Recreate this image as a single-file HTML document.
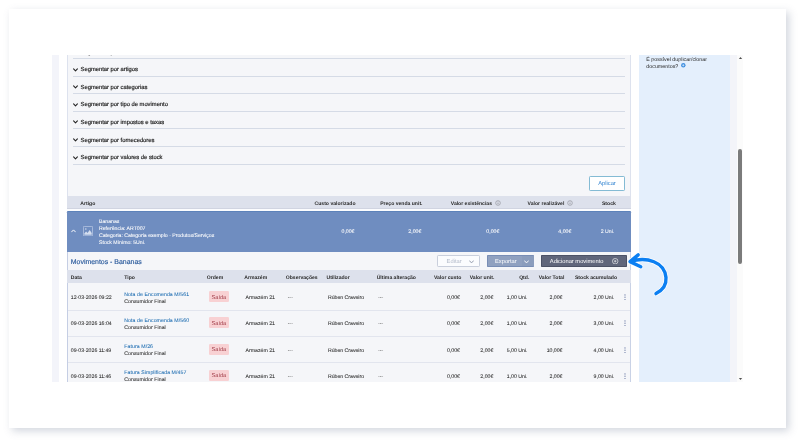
<!DOCTYPE html>
<html lang="pt"><head><meta charset="utf-8"><title>Movimentos - Bananas</title>
<style>
html,body{margin:0;padding:0;background:#fff;}
body{width:800px;height:442px;position:relative;overflow:hidden;font-family:"Liberation Sans",sans-serif;}
#card{position:absolute;left:8.5px;top:8.5px;width:777.4px;height:419px;background:#fff;box-shadow:3px 3px 8px rgba(105,118,145,0.30);}
#shot{position:absolute;left:52px;top:54px;width:691.0px;height:328.0px;overflow:hidden;will-change:transform;}
#in{position:absolute;left:-52px;top:-54px;width:800px;height:442px;}
.b{position:absolute;display:block;}
.t{position:absolute;white-space:nowrap;text-rendering:geometricPrecision;line-height:10px;margin-top:-5px;color:#222;}
.seg{font-size:5.8px;color:#1d1d1d;-webkit-text-stroke:0.18px #1d1d1d;margin-top:-4px;}
.btn{font-size:5.75px;margin-top:-4px;}
.th{font-size:5.08px;font-weight:bold;color:#2a2a2a;margin-top:-4px;}
.td{font-size:5.18px;color:#2b2b2b;-webkit-text-stroke:0.07px currentColor;margin-top:-4px;}
.title{font-size:6.95px;color:#2a5a9c;-webkit-text-stroke:0.15px #2a5a9c;margin-top:-4px;}
.badge{font-size:5.6px;color:#a3404c;margin-top:-4.5px;}
.side{font-size:5.33px;color:#2a2a2a;margin-top:-4.5px;}
</style></head>
<body>
<div id="card"></div>
<div id="shot"><div id="in">
<div class="b " style="left:51.90px;top:54.40px;width:6.80px;height:327.60px;background:#f3f4fa"></div>
<div class="b " style="left:67.30px;top:54.40px;width:563.40px;height:327.60px;background:#f5f6f9;border-left:0.7px solid #dde2ee;border-right:0.7px solid #dde2ee;box-sizing:border-box"></div>
<div class="b " style="left:639.30px;top:54.40px;width:90.80px;height:327.60px;background:#e4effc"></div>
<div class="b " style="left:730.10px;top:54.40px;width:7.10px;height:327.60px;background:#f3f4f9"></div>
<div class="b " style="left:737.20px;top:54.40px;width:5.70px;height:327.60px;background:#fbfbfb"></div>
<div class="b " style="left:738.30px;top:148.70px;width:3.70px;height:115.30px;background:#7b7b7b;border-radius:2px"></div>
<svg class="b" style="left:737.5px;top:55.5px" width="5" height="4" viewBox="0 0 5 4"><path d="M2.5 1.0 L4.1 3.1 L0.9 3.1 Z" fill="#505050"/></svg>
<svg class="b" style="left:737.5px;top:377.2px" width="5" height="4" viewBox="0 0 5 4"><path d="M2.5 3.1 L4.1 1.0 L0.9 1.0 Z" fill="#505050"/></svg>
<div class="b " style="left:73.30px;top:58.00px;width:551.30px;height:0.90px;background:#d5dbe6"></div>
<div class="b " style="left:73.30px;top:75.60px;width:551.30px;height:0.90px;background:#d5dbe6"></div>
<div class="b " style="left:73.30px;top:93.20px;width:551.30px;height:0.90px;background:#d5dbe6"></div>
<div class="b " style="left:73.30px;top:110.80px;width:551.30px;height:0.90px;background:#d5dbe6"></div>
<div class="b " style="left:73.30px;top:128.40px;width:551.30px;height:0.90px;background:#d5dbe6"></div>
<div class="b " style="left:73.30px;top:146.00px;width:551.30px;height:0.90px;background:#d5dbe6"></div>
<div class="b " style="left:73.30px;top:163.85px;width:551.30px;height:0.90px;background:#d5dbe6"></div>
<span class="t seg" style="top:51.50px;left:80.60px;">Segmentar por datas</span>
<svg class="b" style="left:73.2px;top:67.50px" width="5" height="4" viewBox="0 0 5 4"><path d="M0.6 0.9 L2.5 2.9 L4.4 0.9" fill="none" stroke="#222" stroke-width="1.05" stroke-linecap="round" stroke-linejoin="round"/></svg>
<span class="t seg" style="top:69.10px;left:80.60px;">Segmentar por artigos</span>
<svg class="b" style="left:73.2px;top:85.10px" width="5" height="4" viewBox="0 0 5 4"><path d="M0.6 0.9 L2.5 2.9 L4.4 0.9" fill="none" stroke="#222" stroke-width="1.05" stroke-linecap="round" stroke-linejoin="round"/></svg>
<span class="t seg" style="top:86.70px;left:80.60px;">Segmentar por categorias</span>
<svg class="b" style="left:73.2px;top:102.70px" width="5" height="4" viewBox="0 0 5 4"><path d="M0.6 0.9 L2.5 2.9 L4.4 0.9" fill="none" stroke="#222" stroke-width="1.05" stroke-linecap="round" stroke-linejoin="round"/></svg>
<span class="t seg" style="top:104.30px;left:80.60px;">Segmentar por tipo de movimento</span>
<svg class="b" style="left:73.2px;top:120.30px" width="5" height="4" viewBox="0 0 5 4"><path d="M0.6 0.9 L2.5 2.9 L4.4 0.9" fill="none" stroke="#222" stroke-width="1.05" stroke-linecap="round" stroke-linejoin="round"/></svg>
<span class="t seg" style="top:121.90px;left:80.60px;">Segmentar por impostos e taxas</span>
<svg class="b" style="left:73.2px;top:137.90px" width="5" height="4" viewBox="0 0 5 4"><path d="M0.6 0.9 L2.5 2.9 L4.4 0.9" fill="none" stroke="#222" stroke-width="1.05" stroke-linecap="round" stroke-linejoin="round"/></svg>
<span class="t seg" style="top:139.50px;left:80.60px;">Segmentar por fornecedores</span>
<svg class="b" style="left:73.2px;top:155.50px" width="5" height="4" viewBox="0 0 5 4"><path d="M0.6 0.9 L2.5 2.9 L4.4 0.9" fill="none" stroke="#222" stroke-width="1.05" stroke-linecap="round" stroke-linejoin="round"/></svg>
<span class="t seg" style="top:157.10px;left:80.60px;">Segmentar por valores de stock</span>
<div class="b " style="left:589.30px;top:176.20px;width:35.50px;height:14.60px;background:#fff;border:0.7px solid #84bbd4;border-radius:1.2px;box-sizing:border-box"></div>
<span class="t btn" style="top:183.40px;left:598.20px;color:#2f82d0">Aplicar</span>
<div class="b " style="left:67.30px;top:196.20px;width:563.40px;height:12.50px;background:#dde1ec;border-bottom:0.7px solid #d0d4e1;box-sizing:border-box"></div>
<div class="b " style="left:67.30px;top:208.80px;width:563.40px;height:2.10px;background:#fbfcfe"></div>
<span class="t th" style="top:202.80px;left:80.30px;">Artigo</span>
<span class="t th" style="top:202.80px;right:444.50px;">Custo valorizado</span>
<span class="t th" style="top:202.80px;right:377.50px;">Preço venda unit.</span>
<span class="t th" style="top:202.80px;right:308.00px;">Valor existências</span>
<span class="t th" style="top:202.80px;right:235.70px;">Valor realizável</span>
<span class="t th" style="top:202.80px;right:184.20px;">Stock</span>
<svg class="b" style="left:494.70px;top:200.10px" width="6" height="6" viewBox="0 0 6 6"><circle cx="3" cy="3" r="2.35" fill="none" stroke="#6a6a72" stroke-width="0.42"/><path d="M3 2.7V4.2M3 1.7V2.15" stroke="#6a6a72" stroke-width="0.55"/></svg>
<svg class="b" style="left:566.80px;top:200.10px" width="6" height="6" viewBox="0 0 6 6"><circle cx="3" cy="3" r="2.35" fill="none" stroke="#6a6a72" stroke-width="0.42"/><path d="M3 2.7V4.2M3 1.7V2.15" stroke="#6a6a72" stroke-width="0.55"/></svg>
<div class="b " style="left:67.30px;top:210.70px;width:563.40px;height:40.90px;background:#6f8dc0;border-top:0.9px solid #5c82ba;box-sizing:border-box;border-radius:1.3px 1.3px 0 0"></div>
<svg class="b" style="left:70.9px;top:229.3px" width="5" height="4" viewBox="0 0 5 4"><path d="M0.6 2.9 L2.5 0.9 L4.4 2.9" fill="none" stroke="#fff" stroke-width="0.95" stroke-linecap="round" stroke-linejoin="round"/></svg>
<svg class="b" style="left:82.6px;top:226px" width="10" height="10.2" viewBox="0 0 10 10.2"><rect x="0.35" y="0.35" width="9.3" height="9.5" rx="1" fill="none" stroke="#d2dcef" stroke-width="0.65"/><path d="M1.3 8.7 L1.3 7.6 L3.1 5.4 L4.5 6.9 L6.7 3.9 L8.7 7.0 L8.7 8.7 Z" fill="#d4deef"/><circle cx="2.8" cy="2.9" r="0.75" fill="#d4deef"/></svg>
<span class="t td" style="top:220.60px;left:99.00px;color:#fff">Bananas</span>
<span class="t td" style="top:227.90px;left:99.00px;color:#fff">Referência: ART007</span>
<span class="t td" style="top:235.00px;left:99.00px;color:#fff">Categoria: Categoria exemplo - Produtos/Serviços</span>
<span class="t td" style="top:242.10px;left:99.00px;color:#fff">Stock Mínimo: 5Uni.</span>
<span class="t td" style="top:231.00px;right:445.50px;color:#fff">0,00€</span>
<span class="t td" style="top:231.00px;right:378.70px;color:#fff">2,00€</span>
<span class="t td" style="top:231.00px;right:300.70px;color:#fff">0,00€</span>
<span class="t td" style="top:231.00px;right:228.70px;color:#fff">4,00€</span>
<span class="t td" style="top:231.00px;right:185.70px;color:#fff">2 Uni.</span>
<span class="t title" style="top:261.60px;left:70.80px;">Movimentos - Bananas</span>
<div class="b " style="left:437.40px;top:255.10px;width:42.50px;height:11.90px;background:#fbfcfe;border:0.8px solid #c9cfdc;border-radius:1.2px;box-sizing:border-box"></div>
<span class="t btn" style="top:261.20px;left:446.60px;color:#b3bac9">Editar</span>
<svg class="b" style="left:469.2px;top:259.6px" width="5" height="4" viewBox="0 0 5 4"><path d="M0.5 0.8 L2.5 2.9 L4.5 0.8" fill="none" stroke="#939bad" stroke-width="1.0" stroke-linecap="round" stroke-linejoin="round"/></svg>
<div class="b " style="left:486.80px;top:255.10px;width:47.70px;height:11.90px;background:#90a1c0;border:0.8px solid #788db5;border-radius:0.8px;box-sizing:border-box"></div>
<div class="b " style="left:521.50px;top:255.90px;width:12.20px;height:10.30px;background:#8b9dbd"></div>
<span class="t btn" style="top:261.20px;left:495.00px;color:#fff">Exportar</span>
<svg class="b" style="left:524px;top:259.5px" width="5" height="4" viewBox="0 0 5 4"><path d="M0.5 0.8 L2.5 2.9 L4.5 0.8" fill="none" stroke="#fff" stroke-width="0.95" stroke-linecap="round" stroke-linejoin="round"/></svg>
<div class="b " style="left:540.70px;top:255.00px;width:86.60px;height:11.60px;background:#60667b;border:0.8px solid #4c5266;border-radius:0.8px;box-sizing:border-box"></div>
<span class="t btn" style="top:261.00px;left:549.80px;color:#fff">Adicionar movimento</span>
<svg class="b" style="left:612.4px;top:257.7px" width="6.4" height="6.4" viewBox="0 0 6.4 6.4"><circle cx="3.2" cy="3.2" r="2.75" fill="none" stroke="#fff" stroke-width="0.6"/><path d="M3.2 1.9V4.5M1.9 3.2H4.5" stroke="#fff" stroke-width="0.6"/></svg>
<div class="b " style="left:67.30px;top:251.70px;width:0.70px;height:130.30px;background:#c5cee4"></div>
<div class="b " style="left:630.00px;top:251.70px;width:0.70px;height:130.30px;background:#c9d2e6"></div>
<div class="b " style="left:67.30px;top:270.30px;width:563.40px;height:13.20px;background:#dde1ec"></div>
<span class="t th" style="top:277.30px;left:70.80px;">Data</span>
<span class="t th" style="top:277.30px;left:124.30px;">Tipo</span>
<span class="t th" style="top:277.30px;left:206.80px;">Ordem</span>
<span class="t th" style="top:277.30px;left:244.30px;">Armazém</span>
<span class="t th" style="top:277.30px;left:285.80px;">Observações</span>
<span class="t th" style="top:277.30px;left:326.50px;">Utilizador</span>
<span class="t th" style="top:277.30px;left:376.70px;">Última alteração</span>
<span class="t th" style="top:277.30px;right:338.70px;">Valor custo</span>
<span class="t th" style="top:277.30px;right:305.70px;">Valor unit.</span>
<span class="t th" style="top:277.30px;right:270.70px;">Qtd.</span>
<span class="t th" style="top:277.30px;right:235.70px;">Valor Total</span>
<span class="t th" style="top:277.30px;right:183.00px;">Stock acumulado</span>
<span class="t td" style="top:297.00px;left:70.80px;">12-03-2026 09:22</span>
<span class="t td" style="top:293.50px;left:124.30px;letter-spacing:0.08px;color:#1f6eb2">Nota de Encomenda M/561</span>
<span class="t td" style="top:300.50px;left:124.30px;letter-spacing:0.06px;">Consumidor Final</span>
<div class="b " style="left:208.50px;top:291.10px;width:20.25px;height:11.20px;background:#f8d1d3;border-radius:1.3px"></div>
<span class="t badge" style="top:297.00px;left:211.60px;">Saída</span>
<span class="t td" style="top:297.00px;left:245.60px;">Armazém 21</span>
<span class="t td" style="top:297.00px;left:287.70px;">---</span>
<span class="t td" style="top:297.00px;left:327.90px;">Rúben Craveiro</span>
<span class="t td" style="top:297.00px;left:378.00px;">---</span>
<span class="t td" style="top:297.00px;right:340.00px;">0,00€</span>
<span class="t td" style="top:297.00px;right:306.70px;">2,00€</span>
<span class="t td" style="top:297.00px;right:272.50px;">1,00 Uni.</span>
<span class="t td" style="top:297.00px;right:237.50px;">2,00€</span>
<span class="t td" style="top:297.00px;right:185.70px;">2,00 Uni.</span>
<svg class="b" style="left:623.5px;top:293.80px" width="2" height="6.4" viewBox="0 0 2 6.4"><circle cx="1" cy="0.9" r="0.6" fill="#5f6f9c"/><circle cx="1" cy="3.2" r="0.6" fill="#5f6f9c"/><circle cx="1" cy="5.5" r="0.6" fill="#5f6f9c"/></svg>
<div class="b " style="left:67.80px;top:309.85px;width:562.40px;height:0.90px;background:#e2e5ee"></div>
<span class="t td" style="top:323.20px;left:70.80px;">09-03-2026 16:04</span>
<span class="t td" style="top:319.70px;left:124.30px;letter-spacing:0.08px;color:#1f6eb2">Nota de Encomenda M/560</span>
<span class="t td" style="top:326.70px;left:124.30px;letter-spacing:0.06px;">Consumidor Final</span>
<div class="b " style="left:208.50px;top:317.30px;width:20.25px;height:11.20px;background:#f8d1d3;border-radius:1.3px"></div>
<span class="t badge" style="top:323.20px;left:211.60px;">Saída</span>
<span class="t td" style="top:323.20px;left:245.60px;">Armazém 21</span>
<span class="t td" style="top:323.20px;left:287.70px;">---</span>
<span class="t td" style="top:323.20px;left:327.90px;">Rúben Craveiro</span>
<span class="t td" style="top:323.20px;left:378.00px;">---</span>
<span class="t td" style="top:323.20px;right:340.00px;">0,00€</span>
<span class="t td" style="top:323.20px;right:306.70px;">2,00€</span>
<span class="t td" style="top:323.20px;right:272.50px;">1,00 Uni.</span>
<span class="t td" style="top:323.20px;right:237.50px;">2,00€</span>
<span class="t td" style="top:323.20px;right:185.70px;">3,00 Uni.</span>
<svg class="b" style="left:623.5px;top:320.00px" width="2" height="6.4" viewBox="0 0 2 6.4"><circle cx="1" cy="0.9" r="0.6" fill="#5f6f9c"/><circle cx="1" cy="3.2" r="0.6" fill="#5f6f9c"/><circle cx="1" cy="5.5" r="0.6" fill="#5f6f9c"/></svg>
<div class="b " style="left:67.80px;top:335.85px;width:562.40px;height:0.90px;background:#e2e5ee"></div>
<span class="t td" style="top:349.70px;left:70.80px;">09-03-2026 11:49</span>
<span class="t td" style="top:346.20px;left:124.30px;letter-spacing:0.08px;color:#1f6eb2">Fatura M/26</span>
<span class="t td" style="top:353.20px;left:124.30px;letter-spacing:0.06px;">Consumidor Final</span>
<div class="b " style="left:208.50px;top:343.80px;width:20.25px;height:11.20px;background:#f8d1d3;border-radius:1.3px"></div>
<span class="t badge" style="top:349.70px;left:211.60px;">Saída</span>
<span class="t td" style="top:349.70px;left:245.60px;">Armazém 21</span>
<span class="t td" style="top:349.70px;left:287.70px;">---</span>
<span class="t td" style="top:349.70px;left:327.90px;">Rúben Craveiro</span>
<span class="t td" style="top:349.70px;left:378.00px;">---</span>
<span class="t td" style="top:349.70px;right:340.00px;">0,00€</span>
<span class="t td" style="top:349.70px;right:306.70px;">2,00€</span>
<span class="t td" style="top:349.70px;right:272.50px;">5,00 Uni.</span>
<span class="t td" style="top:349.70px;right:237.50px;">10,00€</span>
<span class="t td" style="top:349.70px;right:185.70px;">4,00 Uni.</span>
<svg class="b" style="left:623.5px;top:346.50px" width="2" height="6.4" viewBox="0 0 2 6.4"><circle cx="1" cy="0.9" r="0.6" fill="#5f6f9c"/><circle cx="1" cy="3.2" r="0.6" fill="#5f6f9c"/><circle cx="1" cy="5.5" r="0.6" fill="#5f6f9c"/></svg>
<div class="b " style="left:67.80px;top:361.85px;width:562.40px;height:0.90px;background:#e2e5ee"></div>
<span class="t td" style="top:375.80px;left:70.80px;">09-03-2026 11:46</span>
<span class="t td" style="top:372.30px;left:124.30px;letter-spacing:0.08px;color:#1f6eb2">Fatura Simplificada M/457</span>
<span class="t td" style="top:379.30px;left:124.30px;letter-spacing:0.06px;">Consumidor Final</span>
<div class="b " style="left:208.50px;top:369.90px;width:20.25px;height:11.20px;background:#f8d1d3;border-radius:1.3px"></div>
<span class="t badge" style="top:375.80px;left:211.60px;">Saída</span>
<span class="t td" style="top:375.80px;left:245.60px;">Armazém 21</span>
<span class="t td" style="top:375.80px;left:287.70px;">---</span>
<span class="t td" style="top:375.80px;left:327.90px;">Rúben Craveiro</span>
<span class="t td" style="top:375.80px;left:378.00px;">---</span>
<span class="t td" style="top:375.80px;right:340.00px;">0,00€</span>
<span class="t td" style="top:375.80px;right:306.70px;">2,00€</span>
<span class="t td" style="top:375.80px;right:272.50px;">1,00 Uni.</span>
<span class="t td" style="top:375.80px;right:237.50px;">2,00€</span>
<span class="t td" style="top:375.80px;right:185.70px;">9,00 Uni.</span>
<svg class="b" style="left:623.5px;top:372.60px" width="2" height="6.4" viewBox="0 0 2 6.4"><circle cx="1" cy="0.9" r="0.6" fill="#5f6f9c"/><circle cx="1" cy="3.2" r="0.6" fill="#5f6f9c"/><circle cx="1" cy="5.5" r="0.6" fill="#5f6f9c"/></svg>
<span class="t side" style="top:59.70px;left:646.30px;">É possível duplicar/clonar</span>
<span class="t side" style="top:66.20px;left:646.30px;">documentos?</span>
<svg class="b" style="left:681.2px;top:63.2px" width="4.6" height="4.6" viewBox="0 0 4.6 4.6"><circle cx="2.3" cy="2.3" r="2.2" fill="#3f8fe0"/><path d="M2.3 1.2V3.4M1.2 2.3H3.4" stroke="#fff" stroke-width="0.55"/></svg>
<div class="b " style="left:51.00px;top:53.50px;width:694.00px;height:0.90px;background:#fff"></div>
</div></div>
<svg class="b" style="left:620.8px;top:245px" width="60" height="60" viewBox="620 245 60 60">
<g fill="none" stroke-linecap="round" stroke-linejoin="round">
<path d="M637.2 254.9 L629.0 261.6 L639.8 266.8 M629.6 261.4 C646 256.5 663.5 262 665 277.5 C665.6 285 661 290.5 655 293.6" stroke="#fff" stroke-width="4.8"/>
<path d="M637.2 254.9 L629.0 261.6 L639.8 266.8 M629.6 261.4 C646 256.5 663.5 262 665 277.5 C665.6 285 661 290.5 655 293.6" stroke="#0b7ff2" stroke-width="3.4"/>
</g></svg>
</body></html>
